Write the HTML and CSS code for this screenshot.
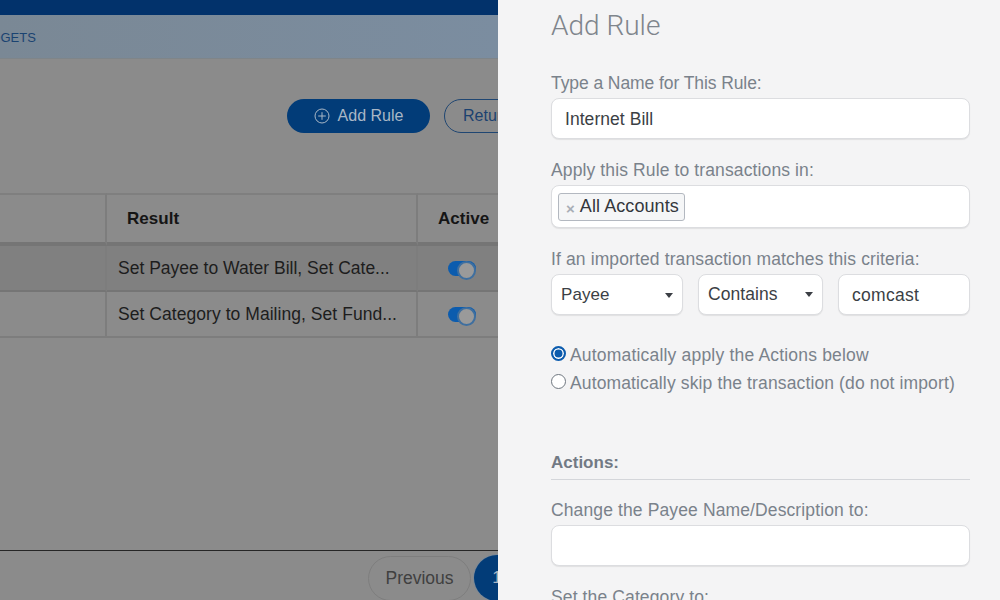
FILE: index.html
```html
<!DOCTYPE html>
<html lang="en">
<head>
<meta charset="utf-8">
<title>Add Rule</title>
<link rel="stylesheet" href="styles.css">
</head>
<body>
<div class="page">
  <main class="back">
    <div class="topbar"></div>
    <nav class="subnav"><span class="navlink">BUDGETS</span></nav>
    <div class="toolbar">
      <button class="btn btn-primary">
        <svg class="plus" width="16" height="16" viewBox="0 0 16 16"><circle cx="8" cy="8" r="7" fill="none" stroke="currentColor" stroke-width="1"/><path d="M8 4.2v7.6M4.2 8h7.6" stroke="currentColor" stroke-width="1" fill="none"/></svg>
        <span class="btn-label">Add Rule</span>
      </button>
      <button class="btn btn-outline">Return to Transactions</button>
    </div>
    <div class="table">
      <div class="cell head"></div>
      <div class="cell head head-result">Result</div>
      <div class="cell head head-active">Active</div>
      <div class="cell row1"></div>
      <div class="cell row1 result result-a">Set Payee to Water Bill, Set Cate...</div>
      <div class="cell row1 active"><span class="toggle"></span></div>
      <div class="cell row2"></div>
      <div class="cell row2 result">Set Category to Mailing, Set Fund...</div>
      <div class="cell row2 active"><span class="toggle"></span></div>
    </div>
    <div class="spacer"></div>
    <div class="pager">
      <span class="prev">Previous</span>
      <span class="pagenum">1</span>
    </div>
  </main>
  <aside class="panel">
    <h1 class="title">Add Rule</h1>
    <label class="label label-first">Type a Name for This Rule:</label>
    <div class="input">Internet Bill</div>
    <label class="label">Apply this Rule to transactions in:</label>
    <div class="input tags"><span class="tag"><span class="tag-x">×</span>All Accounts</span></div>
    <label class="label">If an imported transaction matches this criteria:</label>
    <div class="criteria">
      <div class="input select sel-payee">Payee<span class="caret"></span></div>
      <div class="input select sel-contains">Contains<span class="caret"></span></div>
      <div class="input val">comcast</div>
    </div>
    <div class="radios">
      <div class="radio-row radio-row-a"><span class="radio on"></span>Automatically apply the Actions below</div>
      <div class="radio-row"><span class="radio"></span>Automatically skip the transaction (do not import)</div>
    </div>
    <h2 class="section">Actions:</h2>
    <label class="label label-tight">Change the Payee Name/Description to:</label>
    <div class="input"></div>
    <label class="label label-cat">Set the Category to:</label>
  </aside>
</div>
</body>
</html>
```
FILE: styles.css
```css
* { box-sizing: border-box; }
html, body { margin: 0; height: 100%; }
body { font-family: "Liberation Sans", Arial, sans-serif; overflow: hidden; background: #f4f4f5; }
.page { display: flex; width: 1000px; height: 600px; overflow: hidden; }

.back { width: 498px; height: 600px; flex: none; display: flex; flex-direction: column; overflow: hidden; background: #8b8b8b; }
.topbar { height: 15px; flex: none; background: #02326b; }
.subnav { height: 44px; flex: none; display: flex; align-items: center; background: linear-gradient(90deg, #7a8895, #7b8da0); border-bottom: 1px solid #7f8589; }
.navlink { font-size: 13px; color: #1a4371; margin-left: -27px; padding-top: 1px; }
.toolbar { display: flex; gap: 14px; margin: 40px 0 0 287px; width: 400px; flex: none; }
.btn { height: 34px; border-radius: 17px; font: 16px "Liberation Sans", Arial, sans-serif; display: flex; align-items: center; justify-content: center; flex: none; padding: 0; }
.btn-primary { width: 143px; background: #023c78; border: 0; color: #a9b7c6; gap: 7px; }
.btn-label { margin-left: 1px; }
.plus { color: #a9b7c6; }
.btn-outline { width: 200px; background: transparent; border: 1px solid #1f4672; color: #1c4270; justify-content: flex-start; padding-left: 18px; white-space: nowrap; }
.table { display: grid; grid-template-columns: 107px 311px 120px; grid-template-rows: 53px 46px 46px; margin-top: 60px; flex: none; width: 538px; }
.cell { border-right: 2px solid #7d7d7d; font-size: 17px; display: flex; align-items: center; color: #1d1d1d; }
.head { border-top: 2px solid #7f7f7f; border-bottom: 4px solid #757575; font-weight: bold; color: #151515; letter-spacing: .05px; padding-top: 1px; }
.head-result { padding-left: 20px; }
.head-active { padding-left: 20px; border-right: 0; }
.row1 { background: #808080; border-bottom: 2px solid #757575; }
.row2 { background: #8b8b8b; border-bottom: 2px solid #7d7d7d; }
.result { padding: 1px 0 0 11px; white-space: nowrap; font-size: 17.5px; letter-spacing: .05px; }
.result-a { letter-spacing: 0; }
.active { padding-left: 30px; border-right: 0; }
.toggle { width: 28px; height: 15px; border-radius: 8px; background: #0c5cae; position: relative; }
.toggle::after { content: ""; position: absolute; right: 0; top: 0; width: 15px; height: 15px; border-radius: 50%; background: #9a9a9a; border: 2px solid #3f6f9f; }
.spacer { height: 213px; flex: none; border-bottom: 1px solid #262626; }
.pager { display: flex; margin: 5px 0 0 368px; gap: 3px; flex: none; width: 200px; }
.prev { width: 103px; height: 45px; border: 1px solid #7e7e7e; border-radius: 23px; font-size: 17.5px; color: #404040; display: flex; align-items: center; justify-content: center; }
.pagenum { width: 46px; height: 46px; margin-top: -1px; border-radius: 50%; background: #023c78; color: #a9b7c6; font-size: 17px; display: flex; align-items: center; justify-content: center; flex: none; box-shadow: 0 0 0 1px #7e8a96; }

.panel { flex: 1; padding: 0 30px 0 53px; background: #f4f4f5; overflow: hidden; }
.title { font: 300 28px Roboto, "Liberation Sans", sans-serif; color: #7f858c; margin: 9px 0 0; line-height: 34px; }
.label { display: block; font-size: 17.5px; line-height: 22px; color: #7a828b; margin: 20px 0 4px; white-space: nowrap; letter-spacing: .12px; }
.label-first { margin-top: 29px; letter-spacing: -.08px; }
.input { height: 41px; background: #fff; border: 1px solid #dcdde0; border-radius: 8px; font-size: 17.5px; color: #3b3f45; display: flex; align-items: center; padding: 1px 0 0 13px; box-shadow: 0 1px 1px rgba(0,0,0,.08); letter-spacing: .05px; }
.tags { height: 43px; padding: 0 0 0 6px; }
.tag { height: 28px; border: 1px solid #b3b8c0; border-radius: 3px; background: #f5f6f7; padding: 0 5px 0 7px; display: flex; align-items: center; white-space: nowrap; font-size: 18px; letter-spacing: .08px; color: #33373c; }
.tag-x { color: #a8aeb6; font-weight: bold; font-size: 15px; margin-right: 5px; margin-top: 3px; }
.criteria { display: flex; gap: 15px; }
.select { padding: 1px 9px 0 9px; justify-content: space-between; font-size: 17px; }
.sel-payee { width: 132px; }
.sel-contains { width: 125px; font-size: 17.5px; padding-top: 0; }
.val { flex: 1; padding-left: 13px; letter-spacing: .3px; }
.caret { width: 0; height: 0; border-left: 4px solid transparent; border-right: 4px solid transparent; border-top: 5px solid #3b3f45; }
.radios { margin-top: 26px; }
.radio-row { display: flex; align-items: center; gap: 4px; height: 28px; font-size: 17.5px; color: #7a828b; white-space: nowrap; letter-spacing: .13px; }
.radio-row-a { letter-spacing: .19px; }
.radio { width: 15px; height: 15px; border-radius: 50%; border: 1px solid #6f7780; background: #fff; flex: none; margin-top: -3px; }
.radio.on { border: 2px solid #0c5cae; background: #0c5cae; box-shadow: inset 0 0 0 1.5px #fff; }
.section { font-size: 17px; font-weight: bold; color: #727a84; margin: 54px 0 0; line-height: 22px; padding: 1px 0 5px; border-bottom: 1px solid #d4d6da; }
.label-tight { margin-top: 19px; }
.label-cat { margin-top: 20px; }
```
